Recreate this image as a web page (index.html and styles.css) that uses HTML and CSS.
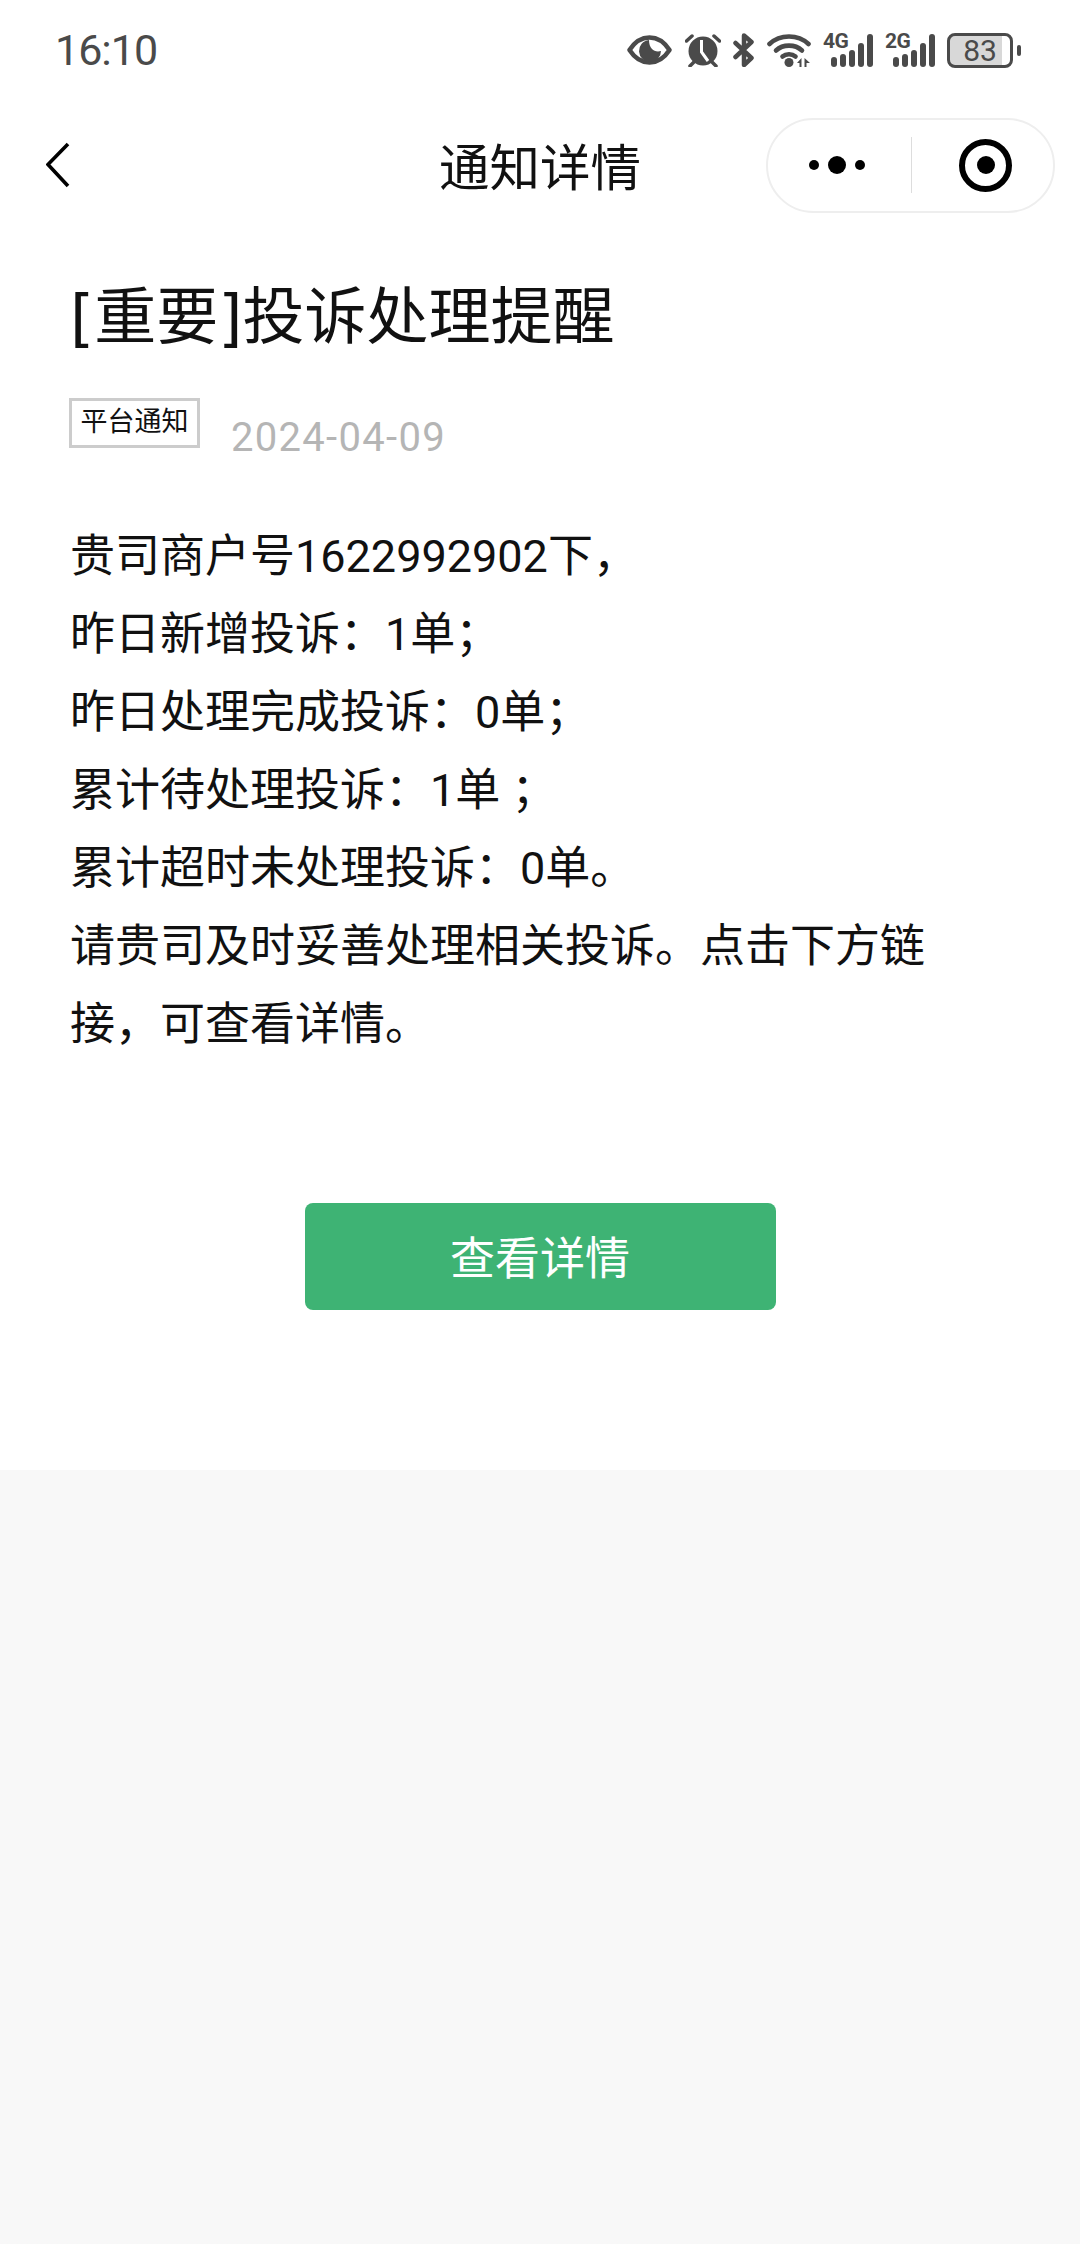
FILE: index.html
```html
<!DOCTYPE html>
<html lang="zh-CN">

<head>
    <meta charset="UTF-8">
    <meta name="viewport" content="width=device-width, initial-scale=1.0">
    <title>通知详情</title>
    <link rel="stylesheet" href="styles.css">
</head>

<body>
    <div id="root">
        <div class="status-bar">
            <span class="time">16:10</span>
            <div class="status-icons">
                <svg class="icon-eye" width="45" height="30" viewBox="0 0 45 30">
                    <path d="M2.500 15C8 6.500 15 2.500 22.500 2.500S37 6.500 42.500 15C37 23.500 30 27.500 22.500 27.500S8 23.500 2.500 15Z" fill="none" stroke="#4a4a4a" stroke-width="4.500" stroke-linejoin="round" />
                    <path d="M22 5A11 11 0 1 0 34 16C30 17 27 16 25 14C23 12 22 9 22 5Z" fill="#4a4a4a" />
                </svg>
                <svg class="icon-alarm" width="36" height="34" viewBox="0 0 36 34">
                    <circle cx="18" cy="18" r="14.500" fill="#4a4a4a" />
                    <path d="M1.500 8 7 3M34.500 8 29 3M5 33 9 29M31 33 27 29" stroke="#4a4a4a" stroke-width="3.500" stroke-linecap="round" />
                    <path d="M16.500 7V19L23 28" fill="none" stroke="#fff" stroke-width="3" />
                </svg>
                <svg class="icon-bt" width="22" height="34" viewBox="0 0 22 34">
                    <path d="M2.500 10 18.500 25 11 32V2.500L18.500 9 2.500 24" fill="none" stroke="#4a4a4a" stroke-width="4.500" stroke-linejoin="round" stroke-linecap="round" />
                </svg>
                <svg class="icon-wifi" width="44" height="34" viewBox="0 0 44 34">
                    <path d="M2.500 11C13 1 31 1 41.500 11" fill="none" stroke="#4a4a4a" stroke-width="4.600" stroke-linecap="round" />
                    <path d="M9 17.500C16 11 28 11 35 17.500" fill="none" stroke="#4a4a4a" stroke-width="4.600" stroke-linecap="round" />
                    <path d="M15.500 23.500C19 20.500 25 20.500 28.500 23.500" fill="none" stroke="#4a4a4a" stroke-width="4.600" stroke-linecap="round" />
                    <circle cx="22" cy="29.500" r="4.500" fill="#4a4a4a" />
                    <path d="M30 30 34.500 25V34H32.500V30ZM37.500 25 43 30 39.500 30V34H37.500Z" fill="#4a4a4a" />
                </svg>
                <div class="signal">
                    <span class="net">4G</span>
                    <i class="bar b1"></i><i class="bar b2"></i><i class="bar b3"></i><i class="bar b4"></i><i class="bar b5"></i>
                </div>
                <div class="signal">
                    <span class="net">2G</span>
                    <i class="bar b1"></i><i class="bar b2"></i><i class="bar b3"></i><i class="bar b4"></i><i class="bar b5"></i>
                </div>
                <div class="battery">
                    <div class="battery-body"><span>83</span></div>
                    <i class="battery-nub"></i>
                </div>
            </div>
        </div>

        <div class="nav">
            <div class="nav-left">
                <svg width="24" height="46" viewBox="0 0 24 46">
                    <path d="M22 2 2 22.500 22 44" fill="none" stroke="#000" stroke-width="3.600" />
                </svg>
            </div>
            <div class="nav-title">通知详情</div>
            <div class="nav-right">
                <div class="capsule">
                    <div class="capsule-more">
                        <i class="dot"></i><i class="dot big"></i><i class="dot"></i>
                    </div>
                    <div class="capsule-line"></div>
                    <div class="capsule-close">
                        <i class="target"></i>
                    </div>
                </div>
            </div>
        </div>

        <div class="article">
            <h1>[重要]投诉处理提醒</h1>
            <div class="meta">
                <span class="tag">平台通知</span>
                <span class="date">2024-04-09</span>
            </div>
            <div class="content">
                <p>贵司商户号1622992902下，</p>
                <p>昨日新增投诉：1单；</p>
                <p>昨日处理完成投诉：0单；</p>
                <p>累计待处理投诉：1单 ；</p>
                <p>累计超时未处理投诉：0单。</p>
                <p>请贵司及时妥善处理相关投诉。点击下方链接，可查看详情。</p>
            </div>
            <div class="action">
                <button type="button" class="btn-detail">查看详情</button>
            </div>
        </div>
        <div class="footer-fill"></div>
    </div>
</body>

</html>
```

FILE: styles.css
```css
* {
    margin: 0;
    padding: 0;
    box-sizing: border-box;
}

html,
body {
    height: 100%;
}

body {
    background-color: #f8f8f8;
    font-family: "Roboto", "Noto Sans CJK SC", sans-serif;
    color: #111;
}

#root {
    width: 1080px;
    height: 2244px;
    display: flex;
    flex-direction: column;
}

.status-bar {
    height: 100px;
    background-color: #fff;
    display: flex;
    justify-content: space-between;
    align-items: center;
    padding: 0 59px 0 55px;
}

.time {
    font-size: 43px;
    color: #4a4a4a;
    letter-spacing: -1px;
}

.status-icons {
    display: flex;
    align-items: center;
}

.icon-eye {
    margin-right: 13px;
}

.icon-alarm {
    margin-right: 12px;
}

.icon-bt {
    margin-right: 12px;
}

.icon-wifi {
    margin-right: 12px;
}

.signal {
    width: 50px;
    height: 34px;
    margin-right: 12px;
    display: flex;
    align-items: flex-end;
    position: relative;
}

.net {
    position: absolute;
    left: 0;
    top: 0;
    font-size: 21px;
    font-weight: 700;
    line-height: 16px;
    letter-spacing: -.5px;
    color: #4a4a4a;
}

.bar {
    display: block;
    width: 6px;
    margin-left: 3px;
    background-color: #4a4a4a;
    border-radius: 3px;
}

.bar.b1 {
    height: 10px;
    margin-left: 8px;
}

.bar.b2 {
    height: 13px;
}

.bar.b3 {
    height: 17px;
}

.bar.b4 {
    height: 24px;
}

.bar.b5 {
    height: 33px;
}

.battery {
    display: flex;
    align-items: center;
    gap: 4px;
}

.battery-body {
    width: 66px;
    height: 35px;
    border: 3px solid #4a4a4a;
    border-radius: 8px;
    background: linear-gradient(to right, #d8d8d8 86%, #fff 86%);
    display: flex;
    justify-content: center;
    align-items: center;
    font-size: 30px;
    color: #4a4a4a;
}

.battery-nub {
    display: block;
    width: 4px;
    height: 11px;
    background-color: #4a4a4a;
    border-radius: 2px;
}

.nav {
    height: 130px;
    background-color: #fff;
    display: grid;
    grid-template-columns: 1fr auto 1fr;
    align-items: center;
}

.nav-left {
    padding-left: 46px;
    display: flex;
    align-items: center;
}

.nav-title {
    font-size: 50.500px;
    padding-bottom: 3px;
    color: #111;
}

.nav-right {
    display: flex;
    justify-content: flex-end;
    padding-right: 25px;
}

.capsule {
    width: 289px;
    height: 95px;
    border: 2px solid #eee;
    border-radius: 48px;
    background-color: #fff;
    display: flex;
    align-items: center;
}

.capsule-more {
    width: 143px;
    padding-right: 6px;
    display: flex;
    justify-content: center;
    align-items: center;
    gap: 9px;
}

.dot {
    display: block;
    width: 10px;
    height: 10px;
    background-color: #000;
    border-radius: 50%;
}

.dot.big {
    width: 18px;
    height: 18px;
}

.capsule-line {
    width: 1px;
    height: 56px;
    background-color: #ddd;
}

.capsule-close {
    flex: 1;
    padding-left: 6px;
    display: flex;
    justify-content: center;
}

.target {
    display: block;
    width: 53px;
    height: 53px;
    border: 6px solid #000;
    border-radius: 50%;
    position: relative;
}

.target::after {
    content: "";
    position: absolute;
    left: 11.500px;
    top: 11.500px;
    width: 18px;
    height: 18px;
    background-color: #000;
    border-radius: 50%;
}

.article {
    height: 1240px;
    background-color: #fff;
    padding: 48px 70px 0;
}

h1 {
    font-family: "DejaVu Sans", "Noto Sans CJK SC", sans-serif;
    font-size: 62px;
    font-weight: 400;
    line-height: 80px;
    color: #111;
}

.meta {
    margin-top: 40px;
    display: flex;
    align-items: flex-start;
}

.tag {
    width: 131px;
    height: 50px;
    margin-left: -1px;
    border: 3px solid #ccc;
    font-size: 27px;
    line-height: 42px;
    text-align: center;
    color: #111;
}

.date {
    margin-left: 31px;
    margin-top: 13px;
    font-size: 40px;
    line-height: 54px;
    color: #b5b5b5;
    letter-spacing: 1.300px;
}

.content {
    margin-top: 53px;
    width: 870px;
    font-size: 45px;
    line-height: 78px;
    color: #111;
}

.action {
    margin-top: 139px;
    display: flex;
    justify-content: center;
}

.btn-detail {
    width: 471px;
    height: 107px;
    padding-bottom: 3px;
    border: none;
    border-radius: 8px;
    background-color: #3eb374;
    color: #fff;
    font-family: inherit;
    font-size: 45px;
}

.footer-fill {
    flex: 1;
    background-color: #f8f8f8;
}
```
